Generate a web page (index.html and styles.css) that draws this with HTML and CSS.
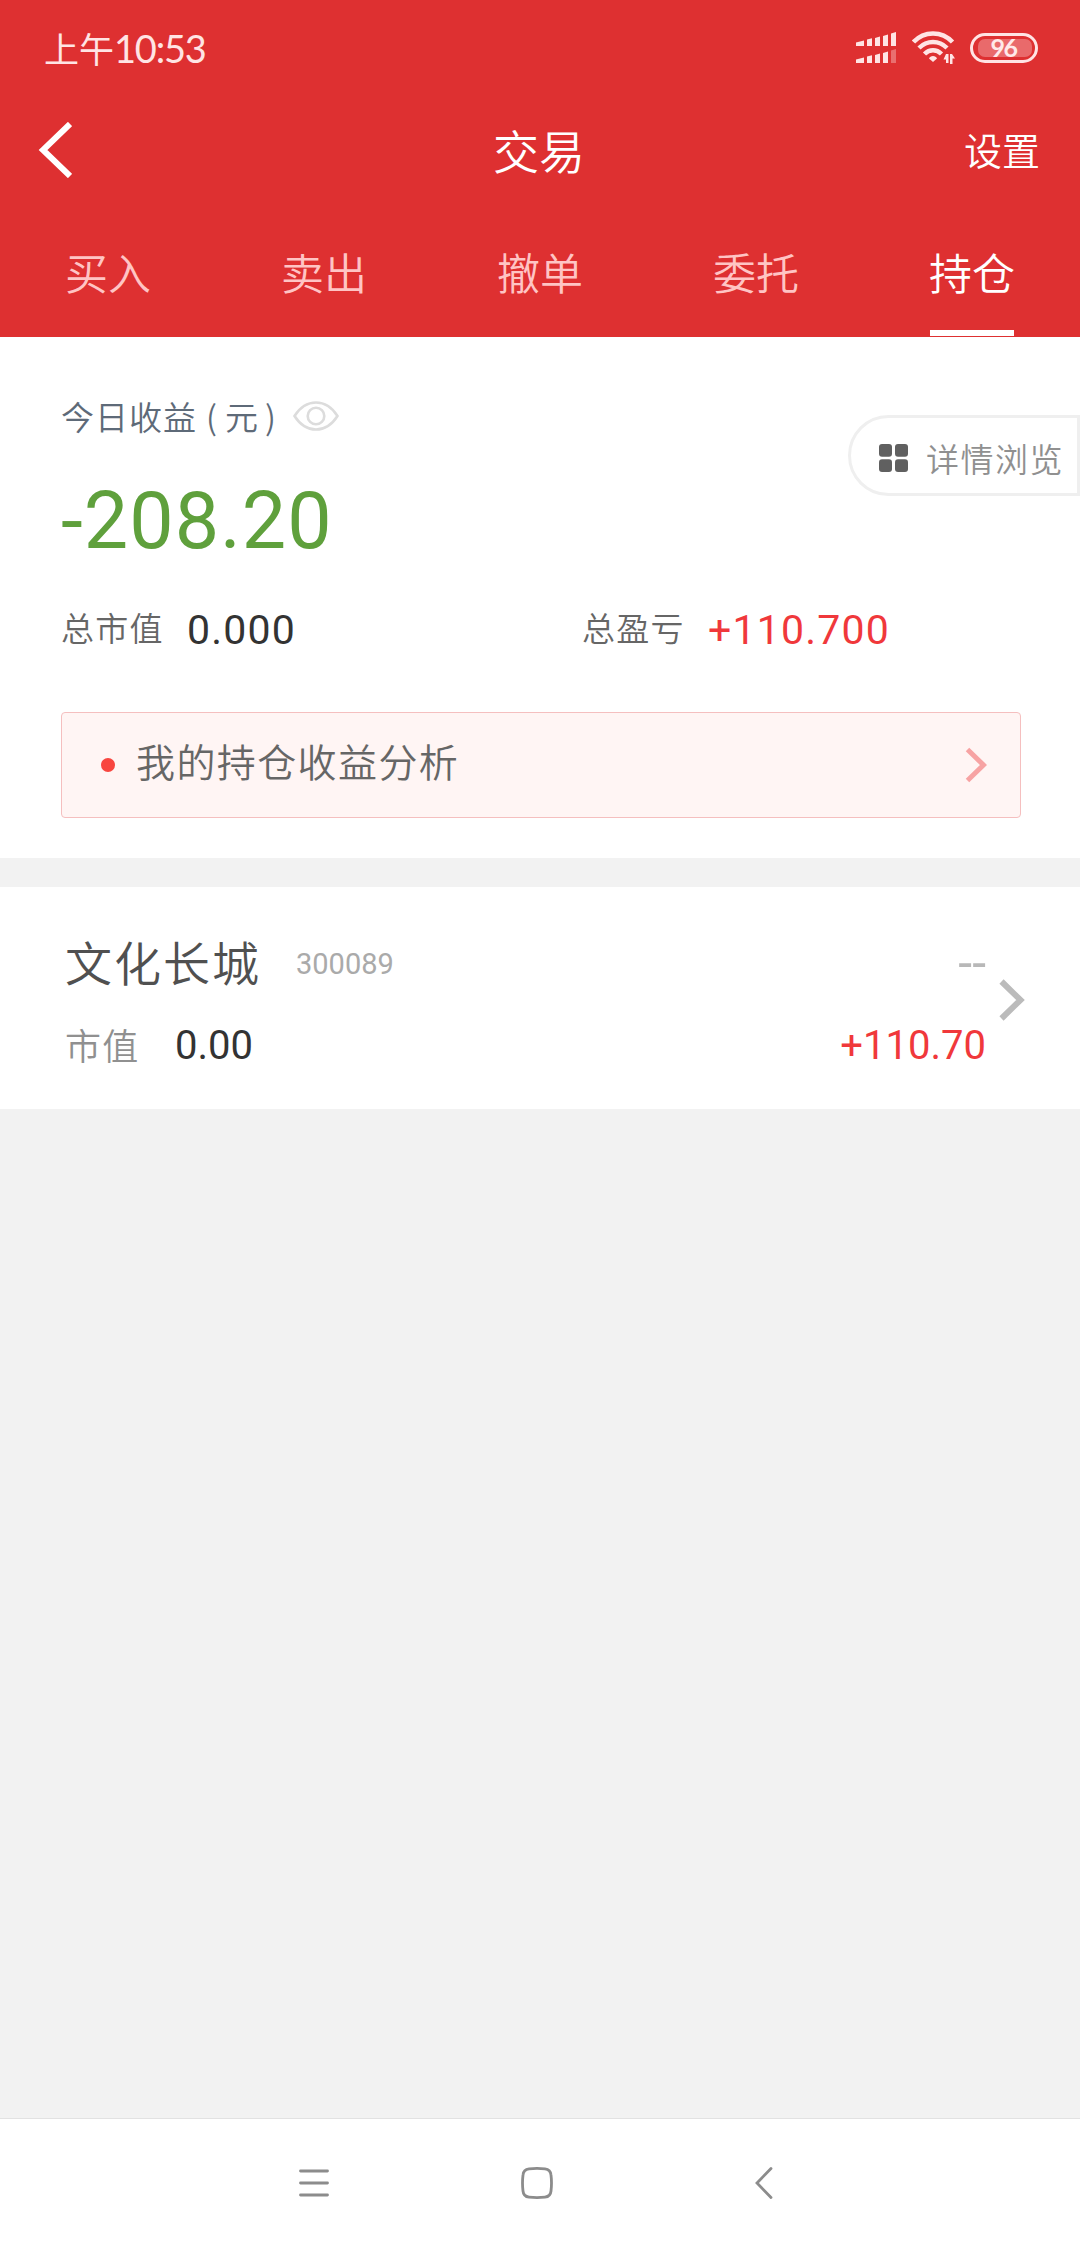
FILE: index.html
```
<!DOCTYPE html>
<html lang="zh-CN">
<head>
  <meta charset="UTF-8">
  <title>交易</title>
  <meta name="viewport" content="width=device-width, initial-scale=1">
  <link rel="stylesheet" href="styles.css">
</head>

<body>

  <header class="header">
    <!-- 状态栏 -->
    <div class="status-bar">
      <span class="time">上午<span class="clock">10:53</span></span>
      <svg class="signal" width="40" height="32" viewBox="0 0 40 32">
        <path d="M0 10.500L8 8.500V14H0zM11 7.500L16 6.300V14H11zM19 6L24 4.500V14H19zM27 4L32 2.500V14H27zM35 1.500L40 0V14H35z"/>
        <path d="M0 27.500L8 25.500V31H0zM11 24.500L16 23.300V31H11zM19 23L24 21.500V31H19zM27 21L32 19.500V31H27z"/>
        <path class="weak" d="M35 18.500L40 17V31H35z"/>
      </svg>
      <svg class="wifi" width="43" height="34" viewBox="0 0 43 34">
        <path class="arc" d="M1.500 11C12 -0.500 30 -0.500 40.500 11M7 17C15 9 27 9 35 17M12.500 23C17.500 18 24.500 18 29.500 23"/>
        <path d="M21 31L17 27.500C18 24 24 24 25 27.500z"/>
        <path d="M34 23h2.500v9H34v-3.500h-2.500zM38 33v-10h2l3 4.500h-2.500V33z"/>
      </svg>
      <span class="battery"><span class="battery-level">96</span></span>
    </div>

    <!-- 标题栏 -->
    <div class="title-bar">
      <svg class="back" width="34" height="56" viewBox="0 0 34 56">
        <path d="M32 2L5 28L32 54"/>
      </svg>
      <h1 class="title">交易</h1>
      <a class="settings">设置</a>
    </div>

    <nav class="tabs">
      <a class="tab">买入</a>
      <a class="tab">卖出</a>
      <a class="tab">撤单</a>
      <a class="tab">委托</a>
      <a class="tab active">持仓</a>
    </nav>
  </header>

  <!-- 收益汇总 -->
  <section class="summary">
    <div class="today-label">
      <span>今日收益<span class="paren-open">(</span>元<span class="paren-close">)</span></span>
      <svg class="eye" width="46" height="30" viewBox="0 0 46 30">
        <path d="M1.500 15C13 -3 33 -3 44.500 15C33 33 13 33 1.500 15z"/>
        <circle cx="23" cy="15" r="8.300"/>
      </svg>
    </div>
    <div class="today-value">-208.20</div>
    <div class="totals">
      <div class="total"><span class="label">总市值</span><span class="value">0.000</span></div>
      <div class="total"><span class="label">总盈亏</span><span class="value up">+110.700</span></div>
    </div>
    <a class="analysis">
      <span class="dot"></span>
      <span class="analysis-text">我的持仓收益分析</span>
      <svg class="analysis-arrow" width="22" height="36" viewBox="0 0 22 36">
        <path d="M2.500 2.500L18.500 18L2.500 33.500"/>
      </svg>
    </a>

    <a class="detail-view">
      <svg width="29" height="28" viewBox="0 0 29 28">
        <rect x="0" y="0" width="13" height="12.700" rx="3"/>
        <rect x="16" y="0" width="13" height="12.700" rx="3"/>
        <rect x="0" y="15.300" width="13" height="12.700" rx="3"/>
        <rect x="16" y="15.300" width="13" height="12.700" rx="3"/>
      </svg>
      <span>详情浏览</span>
    </a>
  </section>

  <!-- 持仓列表 -->
  <main class="stock-list">
    <a class="stock">
      <div class="stock-info">
        <div class="stock-row">
          <span class="stock-name">文化长城</span>
          <span class="stock-code">300089</span>
          <span class="stock-change">--</span>
        </div>
        <div class="stock-row second">
          <span class="stock-label">市值</span>
          <span class="stock-value">0.00</span>
          <span class="stock-profit">+110.70</span>
        </div>
      </div>
      <svg class="stock-arrow" width="26" height="42" viewBox="0 0 26 42">
        <path d="M2.500 2.500L21.500 21L2.500 39.500"/>
      </svg>
    </a>
  </main>

  <!-- 系统导航键 -->
  <footer class="system-nav">
    <svg width="30" height="32" viewBox="0 0 30 32">
      <path d="M1.500 4H28.500M1.500 16H28.500M1.500 28H28.500"/>
    </svg>
    <svg class="home" width="32" height="32" viewBox="0 0 32 32">
      <path d="M8 1.900Q16 1 24 1.900Q29.500 2.500 30 8Q31 16 30 24Q29.500 29.500 24 30.100Q16 31 8 30.100Q2.500 29.500 2 24Q1 16 2 8Q2.500 2.500 8 1.900z"/>
    </svg>
    <svg width="18" height="32" viewBox="0 0 18 32">
      <path d="M16 1.500L2 16L16 30.500"/>
    </svg>
  </footer>

</body>
</html>
```
FILE: styles.css
```
* {
  box-sizing: border-box;
}

body {
  margin: 0;
  height: 2248px;
  display: flex;
  flex-direction: column;
  background: #f2f2f2;
  color: #333;
  font-family: Roboto, "Noto Sans CJK SC", sans-serif;
}

svg {
  display: block;
  flex: none;
}

/* 顶部 */
.header {
  height: 337px;
  background: #de3031;
  color: #fff;
  font-family: "Noto Sans CJK SC", sans-serif;
}

.status-bar {
  display: flex;
  align-items: center;
  height: 96px;
  padding: 0 42px 0 44px;
}

.time {
  margin-right: auto;
  font-family: Lato, "Noto Sans CJK SC", sans-serif;
  font-size: 35px;
  line-height: 48px;
  color: #ffe4e4;
}

.clock {
  font-size: 38px;
  letter-spacing: -1.2px;
}

.signal {
  margin-right: 16px;
  fill: #ffe4e4;
}

.weak {
  opacity: 0.35;
}

.wifi {
  margin-right: 15px;
  fill: #ffe4e4;
}

.arc {
  fill: none;
  stroke: #ffe4e4;
  stroke-width: 4.5;
}

.battery {
  width: 68px;
  height: 30px;
  padding: 3px 5px;
  border: 3px solid #ffe4e4;
  border-radius: 15px;
}

.battery-level {
  display: block;
  width: 54px;
  height: 18px;
  border-radius: 7px;
  background: #e96a6b;
  color: #ffe9e9;
  font: bold 25px/17px Lato, sans-serif;
  letter-spacing: -1.5px;
  text-indent: -3px;
  text-align: center;
}

.title-bar {
  display: grid;
  grid-template-columns: 1fr auto 1fr;
  align-items: center;
  height: 107px;
  padding: 0 40px 0 38px;
}

.back {
  fill: none;
  stroke: #fff;
  stroke-width: 6;
}

.title {
  margin: 0;
  padding-bottom: 2px;
  font-size: 46px;
  font-weight: 350;
  line-height: 60px;
}

.settings {
  justify-self: end;
  padding-bottom: 1px;
  font-size: 38px;
  font-weight: 350;
  line-height: 56px;
}

.tabs {
  display: flex;
  height: 134px;
}

.tab {
  flex: 1;
  display: flex;
  flex-direction: column;
  align-items: center;
  padding-top: 36px;
  font-size: 43px;
  font-weight: 350;
  line-height: 64px;
  color: #ffc4c4;
}

.tab.active {
  color: #fff;
}

.tab.active::after {
  content: "";
  width: 84px;
  height: 6px;
  margin-top: 27px;
  background: #fff;
}

/* 收益汇总 */
.summary {
  position: relative;
  height: 521px;
  padding: 55px 59px 0 61px;
  background: #fff;
}

.today-label {
  display: flex;
  align-items: center;
  height: 48px;
  font-family: "Noto Sans CJK SC", sans-serif;
  font-size: 33px;
  font-weight: 350;
  letter-spacing: 1px;
  color: #5e6a78;
}

.paren-open {
  margin: 0 7px 0 9px;
}

.paren-close {
  margin-left: 6px;
}

.eye {
  margin-left: 16px;
  fill: none;
  stroke: #dcdcdc;
  stroke-width: 2.6;
}

.today-value {
  margin-top: 33px;
  font-size: 79px;
  line-height: 96px;
  letter-spacing: 1px;
  color: #5fa03c;
}

.totals {
  display: grid;
  grid-template-columns: 521px 1fr;
  margin-top: 33px;
}

.total {
  display: flex;
  align-items: center;
  height: 56px;
}

.label {
  width: 126px;
  font-size: 33px;
  font-weight: 350;
  line-height: 52px;
  letter-spacing: 1.3px;
  padding-bottom: 1px;
  color: #666;
}

.value {
  font-size: 41px;
  letter-spacing: 1.2px;
}

.up {
  color: #f0383b;
}

.analysis {
  display: flex;
  align-items: center;
  height: 106px;
  margin-top: 54px;
  padding: 0 33px 0 39px;
  border: 1.500px solid #f5bfbf;
  border-radius: 4px;
  background: #fff5f4;
}

.dot {
  width: 14px;
  height: 14px;
  border-radius: 50%;
  background: #f8463f;
}

.analysis-text {
  margin-left: 21px;
  padding-bottom: 10px;
  font-size: 39px;
  font-weight: 350;
  letter-spacing: 1.4px;
  color: #666;
}

.analysis-arrow {
  margin-left: auto;
  fill: none;
  stroke: #f7a3a3;
  stroke-width: 5;
}

/* 右侧悬浮按钮 */
.detail-view {
  position: absolute;
  top: 78px;
  right: 0;
  display: flex;
  align-items: center;
  width: 232px;
  height: 81px;
  padding-left: 28px;
  border: 3px solid #efefef;
  border-radius: 41px 0 0 41px;
  background: #fff;
  fill: #606060;
  font-size: 33px;
  font-weight: 350;
  letter-spacing: 1.5px;
  color: #909090;
}

.detail-view svg {
  margin-top: 4px;
}

.detail-view span {
  margin-left: 18px;
  padding-top: 4px;
}

/* 持仓列表 */
.stock-list {
  margin-top: 29px;
}

.stock {
  display: flex;
  align-items: center;
  height: 222px;
  padding: 3px 55px 0 65px;
  background: #fff;
}

.stock-info {
  flex: 1;
  padding-top: 8px;
}

.stock-row {
  display: flex;
  align-items: center;
  height: 78px;
}

.stock-row.second {
  height: 86px;
}

.stock-name {
  font-size: 47px;
  font-weight: 350;
  letter-spacing: 2px;
  color: #505050;
}

.stock-code {
  margin-left: 35px;
  padding-top: 6px;
  font-size: 29px;
  color: #aaa;
}

.stock-change {
  margin-left: auto;
  padding-top: 4px;
  font-size: 50px;
  color: #b8b8b8;
}

.stock-label {
  width: 110px;
  padding-top: 2px;
  font-size: 36px;
  font-weight: 350;
  letter-spacing: 1.2px;
  color: #909090;
}

.stock-value {
  padding-top: 6px;
  font-size: 40px;
}

.stock-profit {
  margin-left: auto;
  padding-top: 5px;
  font-size: 40px;
  color: #f0383b;
}

.stock-arrow {
  margin-left: 13px;
  fill: none;
  stroke: #bbb;
  stroke-width: 6;
}

/* 系统导航键 */
.system-nav {
  display: flex;
  align-items: center;
  height: 130px;
  margin-top: auto;
  padding: 0 0 2px 299px;
  border-top: 1px solid #e2e2e2;
  background: #fff;
  fill: none;
  stroke: #8c8c8c;
  stroke-width: 2.8;
  stroke-linecap: round;
}

.home {
  margin: 0 202px 0 192px;
}
```
